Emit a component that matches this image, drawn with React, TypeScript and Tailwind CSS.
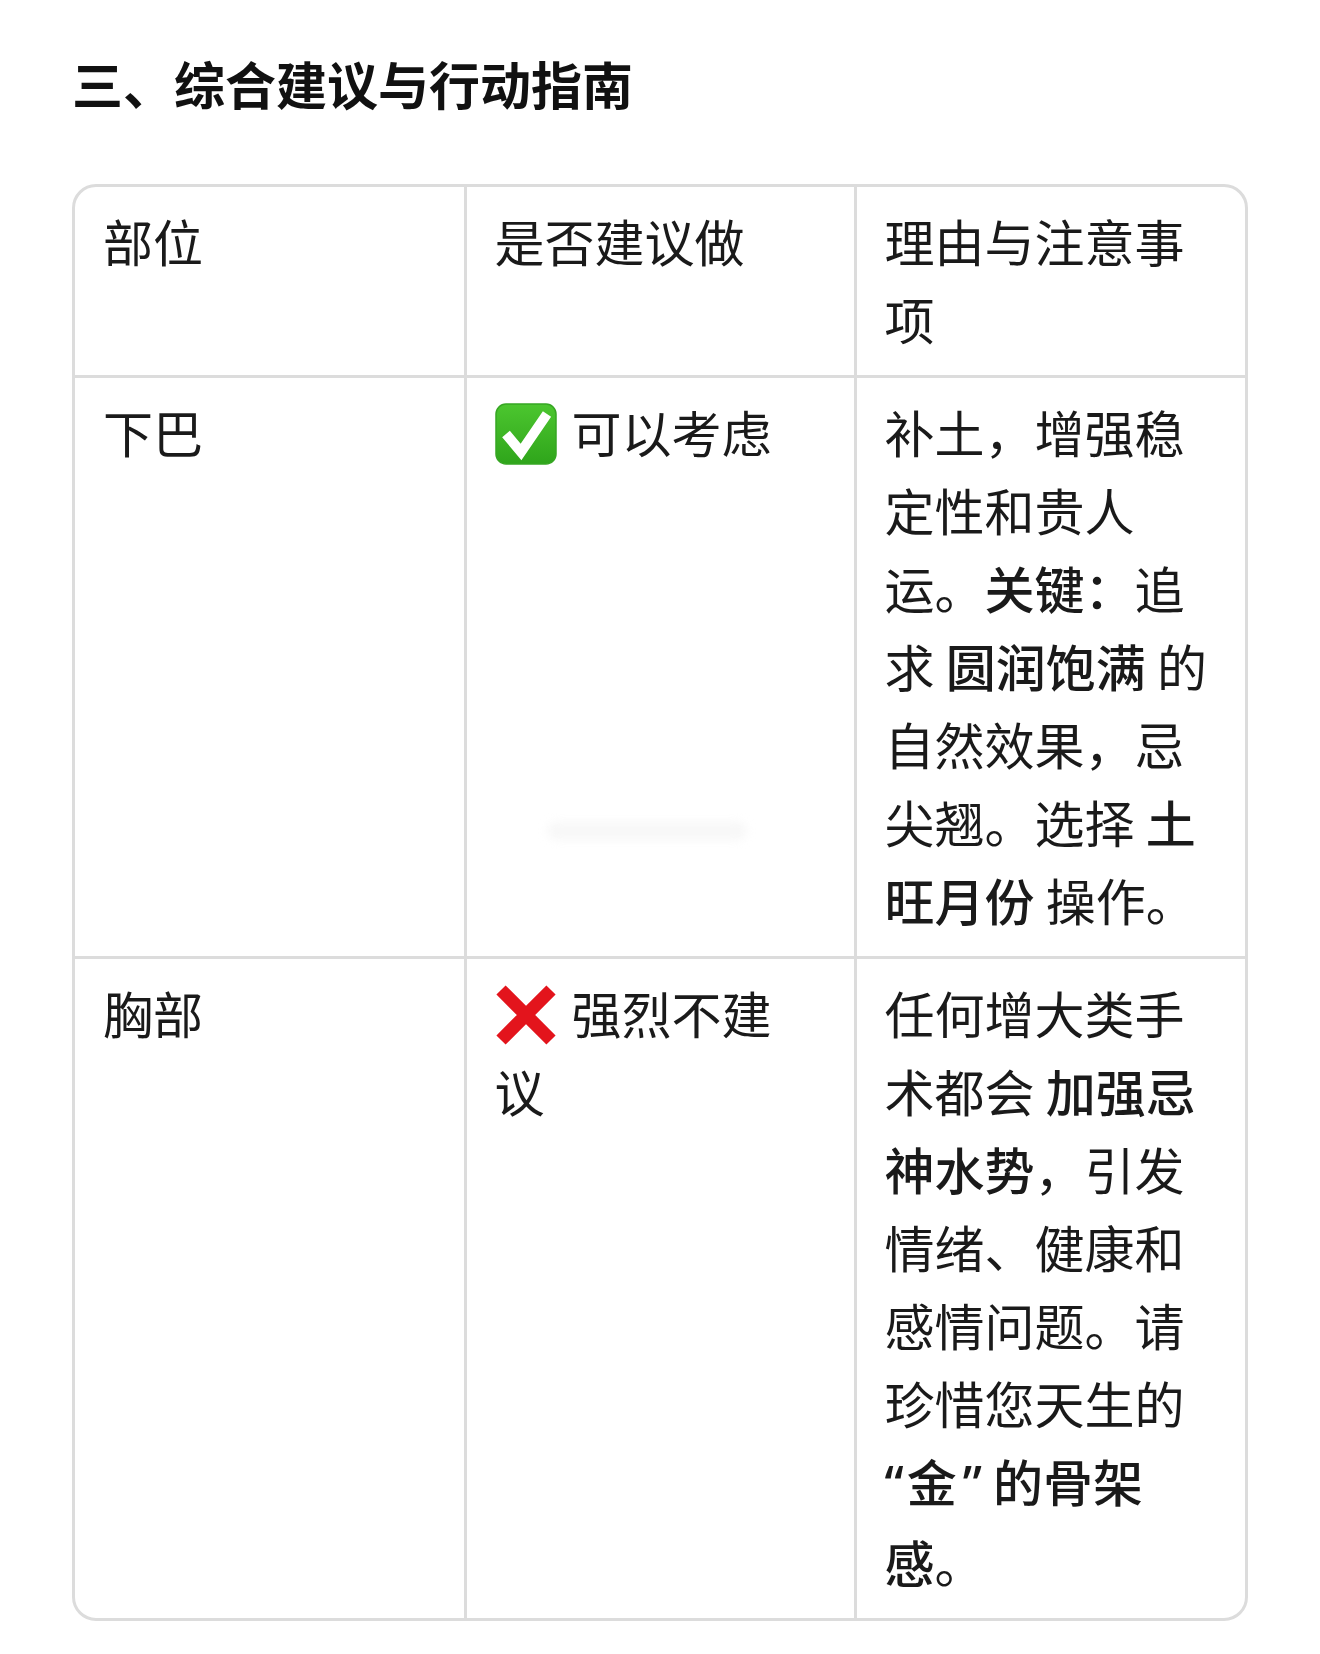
import type { ReactNode } from "react"

function CheckEmoji() {
  return (
    <svg
      viewBox="0 0 62 62"
      className="mr-[15px] inline-block h-[62px] w-[62px] align-[-12px]"
    >
      <defs>
        <linearGradient id="chk" x1="0" y1="0" x2="0" y2="1">
          <stop offset="0" stopColor="#4cc62f" />
          <stop offset="1" stopColor="#2fa51b" />
        </linearGradient>
      </defs>
      <rect x="1" y="1" width="60" height="60" rx="10" fill="url(#chk)" stroke="#36a623" strokeWidth="1.5" />
      <path
        d="M11 31 L26 49 L52 11"
        fill="none"
        stroke="#ffffff"
        strokeWidth="10"
        strokeLinejoin="miter"
        strokeLinecap="butt"
      />
    </svg>
  )
}

function CrossEmoji() {
  return (
    <svg
      viewBox="0 0 62 62"
      className="mr-[15px] inline-block h-[62px] w-[62px] align-[-12px]"
    >
      <path d="M6 6 L56 56 M56 6 L6 56" stroke="#e3141c" strokeWidth="13" strokeLinecap="butt" />
    </svg>
  )
}

function Cell({ children, last = false, bottom = true }: { children: ReactNode; last?: boolean; bottom?: boolean }) {
  return (
    <td
      className={`relative px-[28px] pt-[14px] pb-[18px] align-top ${last ? "" : "border-r-[3px]"} ${
        bottom ? "border-b-[3px]" : ""
      } border-[#dcdcdc]`}
    >
      {children}
    </td>
  )
}

// 强调文字：参考图里比正文略粗
function B({ children }: { children: ReactNode }) {
  return <span className="font-medium">{children}</span>
}

export default function App() {
  return (
    <div className="min-h-[1654px] bg-white px-[72px] pt-[44px] font-['Noto_Sans_CJK_SC','Noto_Sans',sans-serif] text-[#1a1a1a]">
      <h2 className="text-[51px] font-bold leading-[78px] text-[#111]">三、综合建议与行动指南</h2>

      <div className="mt-[62px] overflow-hidden rounded-[24px] border-[3px] border-[#dcdcdc]">
        <table className="w-full table-fixed border-collapse text-[50px] leading-[78px]">
          <tbody>
            <tr>
              <Cell>部位</Cell>
              <Cell>是否建议做</Cell>
              <Cell last>理由与注意事项</Cell>
            </tr>
            <tr>
              <Cell>下巴</Cell>
              <Cell>
                <CheckEmoji />
                可以考虑
                <span className="absolute left-[80px] top-[444px] h-[18px] w-[200px] rounded-full bg-[#f0f0f0] opacity-50 blur-[5px]" />
              </Cell>
              <Cell last>
                补土，增强稳定性和贵人运。<B>关键：</B>追求 <B>圆润饱满</B> 的自然效果，忌尖翘。选择 <B>土旺月份</B> 操作。
              </Cell>
            </tr>
            <tr>
              <Cell bottom={false}>胸部</Cell>
              <Cell bottom={false}>
                <CrossEmoji />
                强烈不建
                <br />
                议
              </Cell>
              <Cell last bottom={false}>
                任何增大类手术都会 <B>加强忌神水势</B>，引发情绪、健康和感情问题。请珍惜您天生的
                <wbr />
                <B>
                  <span className="mr-[3px] font-['Noto_Sans',sans-serif]">“</span>金
                  <span className="ml-[6px] font-['Noto_Sans',sans-serif]">”</span>
                </B>{" "}
                <B>的骨架感</B>。
              </Cell>
            </tr>
          </tbody>
        </table>
      </div>
    </div>
  )
}
